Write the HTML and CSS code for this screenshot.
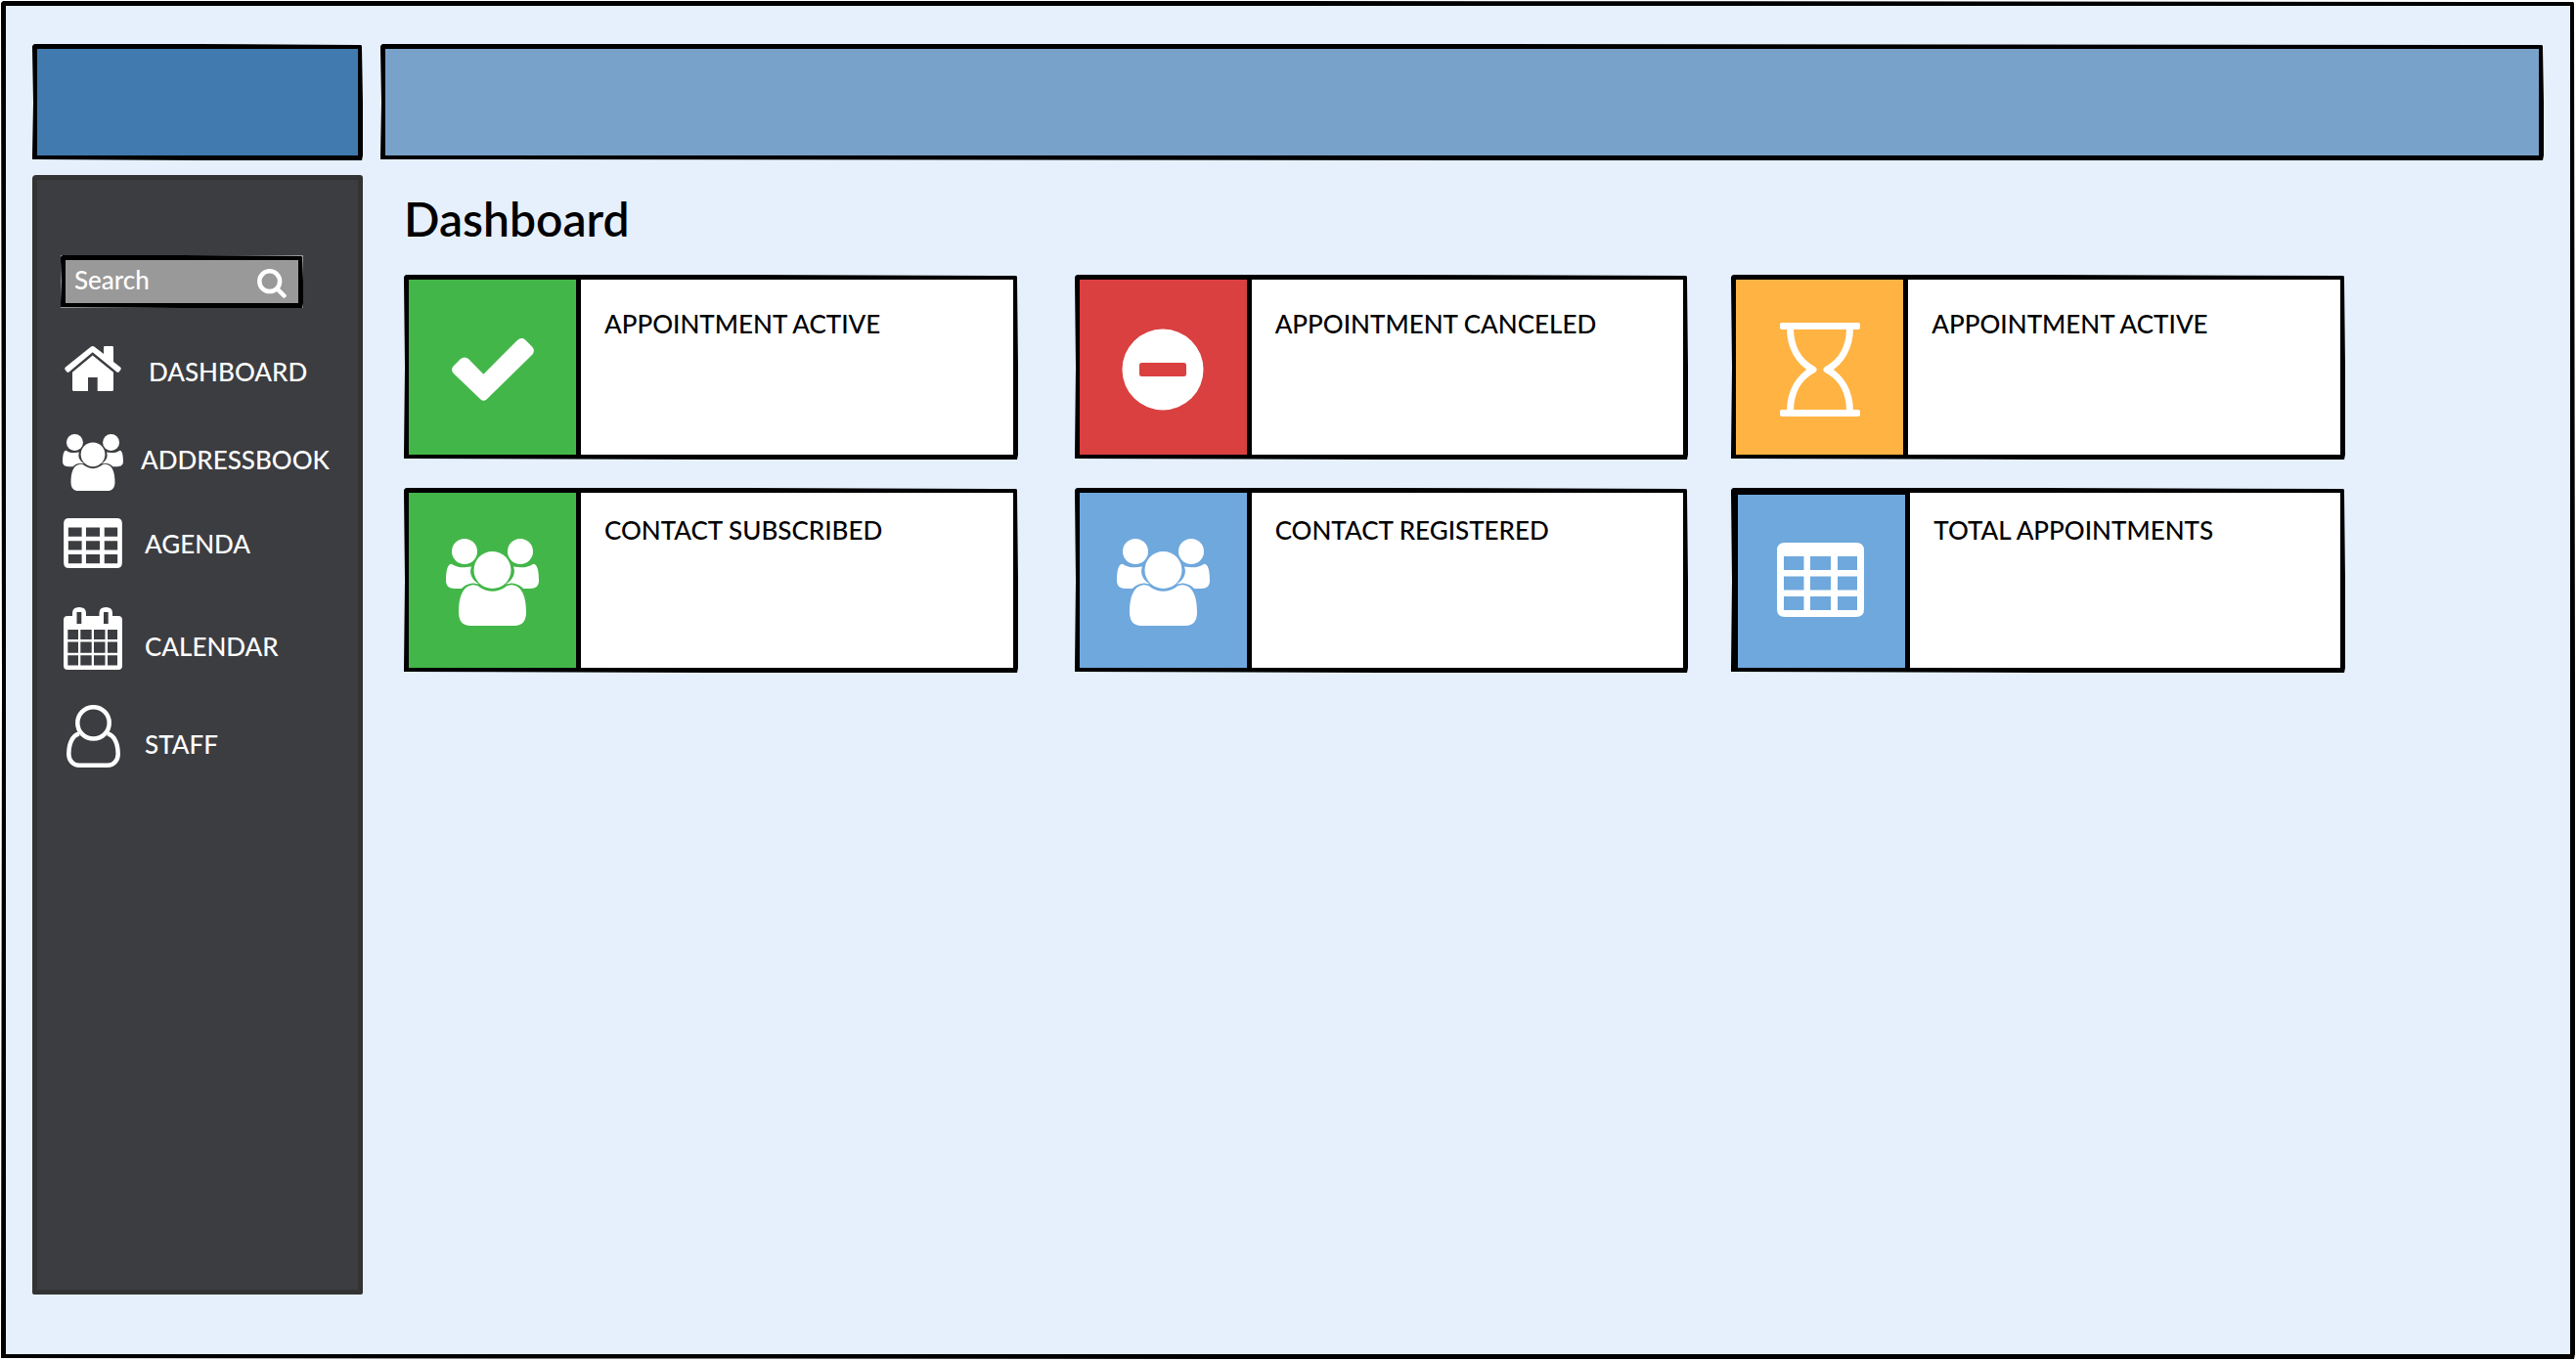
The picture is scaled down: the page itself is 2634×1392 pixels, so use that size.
FILE: index.html
```html
<!DOCTYPE html>
<html lang="en">
<head>
<meta charset="utf-8">
<title>Dashboard</title>
<link rel="stylesheet" href="styles.css">
</head>
<body>
<svg class="sprite" aria-hidden="true">
  <symbol id="i-home" viewBox="0 0 58 46">
    <path d="M1 21.500 L26.500 1 Q28.700 -.8 31 1 L40 8 V1.200 Q40 0 41.200 0 H48.800 Q50 0 50 1.200 V16 L57 21.500 Q58.400 22.800 57.300 24.200 L55.800 26.200 Q54.600 27.400 53.200 26.300 L28.700 6.300 L4.800 26.300 Q3.400 27.400 2.200 26.200 L.7 24.200 Q-.4 22.800 1 21.500Z"/>
    <path d="M28.700 9.500 L50 26.800 V44.500 Q50 46 48.500 46 H33.700 V32 H24 V46 H9.500 Q8 46 8 44.500 V26.800Z"/>
  </symbol>
  <symbol id="i-users" viewBox="0 0 95 89">
    <circle cx="19" cy="13" r="13"/>
    <circle cx="76" cy="13" r="13"/>
    <circle cx="47.500" cy="32" r="19"/>
    <path id="side" d="M6 26 C10 28.500 14 29.500 19 29.300 L26 28.500 C23.500 35 26 42 34 46.500 L28 45.500 C22 46 18 48.500 16 51 H9 C3 51 0 48 0 43 C0 35 1 28 4 26.200 Q5 25.600 6 26Z"/>
    <use href="#side" transform="matrix(-1 0 0 1 95 0)"/>
    <path d="M26 47.500 C30 47 33 48 35 50 A23 23 0 0 0 60 50 C62 48 65 47 69 47.500 C78 49 82 60 82 75 C82 84 78 89 70 89 H25 C17 89 13 84 13 75 C13 60 17 49 26 47.500Z"/>
  </symbol>
  <symbol id="i-table" viewBox="0 0 89 76">
    <path fill-rule="evenodd" d="M8 0H81Q89 0 89 8V68Q89 76 81 76H8Q0 76 0 68V8Q0 0 8 0Z M7 14V28H27.500V14Z M34 14V28H55V14Z M62 14V28H82V14Z M7 34.500V48.500H27.500V34.500Z M34 34.500V48.500H55V34.500Z M62 34.500V48.500H82V34.500Z M7 55V69H27.500V55Z M34 55V69H55V55Z M62 55V69H82V55Z"/>
  </symbol>
  <symbol id="i-calendar" viewBox="0 0 60 64">
    <path fill-rule="evenodd" d="M4 9H9V6Q9 0 16 0T23 6V9H36.500V6Q36.500 0 43.300 0T50 6V9H56Q60 9 60 13V60Q60 64 56 64H4Q0 64 0 60V13Q0 9 4 9Z M13.500 5V17H18.300V5Z M41 5V17H45.700V5Z M4.300 23V33H15V23Z M17.300 23V33H28.700V23Z M31 23V33H42.500V23Z M45 23V33H55V23Z M4.300 35.500V46.700H15V35.500Z M17.300 35.500V46.700H28.700V35.500Z M31 35.500V46.700H42.500V35.500Z M45 35.500V46.700H55V35.500Z M4.300 49.300V59.500H15V49.300Z M17.300 49.300V59.500H28.700V49.300Z M31 49.300V59.500H42.500V49.300Z M45 49.300V59.500H55V49.300Z"/>
  </symbol>
  <symbol id="i-user" viewBox="0 0 55 64">
    <g fill="none" stroke="currentColor" stroke-width="4.500">
      <circle cx="27.500" cy="18.400" r="16.200"/>
      <path d="M13 29.500 C5 31 2.300 42 2.300 50 C2.300 57 7 61.700 13 61.700 H42 C48 61.700 52.700 57 52.700 50 C52.700 42 50 31 42 29.500"/>
    </g>
  </symbol>
  <symbol id="i-search" viewBox="0 0 30 30">
    <g fill="none" stroke="currentColor" stroke-width="4.500" stroke-linecap="round">
      <circle cx="12.700" cy="12.700" r="10.400"/>
      <path d="M20.500 20.500 L27.500 27.500"/>
    </g>
  </symbol>
  <symbol id="i-check" viewBox="0 0 84 64">
    <path d="M9 21 Q13 18 17 21 L32.400 36.700 L67 2 Q71 -1.500 75 1.500 L82 8.500 Q85.500 12.500 82.500 16.500 L35.500 62.500 Q32.400 65 29.500 62.500 L1.800 36 Q-1.500 32 1.500 28.500Z"/>
  </symbol>
  <symbol id="i-minus" viewBox="0 0 84 84">
    <path fill-rule="evenodd" d="M42 0.500A41.500 41.500 0 1 1 42 83.500A41.500 41.500 0 1 1 42 .5Z M20.500 35Q18 35 18 37.500V46.500Q18 49 20.500 49H63.500Q66 49 66 46.500V37.500Q66 35 63.500 35Z"/>
  </symbol>
  <symbol id="i-hourglass" viewBox="0 0 82 96">
    <rect width="82" height="7" rx="2"/>
    <rect y="89" width="82" height="7" rx="2"/>
    <g fill="none" stroke="currentColor" stroke-width="7" stroke-linejoin="round">
      <path d="M10.500 5 C10.500 25 19 40 34 48 C19 56 10.500 71 10.500 91"/>
      <path d="M71.500 5 C71.500 25 63 40 48 48 C63 56 71.500 71 71.500 91"/>
    </g>
  </symbol>
</svg>

<div class="frame sketch">
  <div class="brand sketch"></div>
  <header class="topbar sketch"></header>

  <aside class="sidebar">
    <form class="search sketch" role="search">
      <input class="search-input" type="search" placeholder="Search" aria-label="Search">
      <button class="search-button" type="submit" aria-label="Search"><svg class="icon" width="30" height="30"><use href="#i-search"/></svg></button>
    </form>
    <nav>
      <ul class="menu">
        <li><a class="menu-link menu-link-wide" href="#dashboard"><span class="menu-icon"><svg class="icon" width="58" height="46"><use href="#i-home"/></svg></span><span class="menu-label">DASHBOARD</span></a></li>
        <li><a class="menu-link menu-link-close" href="#addressbook"><span class="menu-icon"><svg class="icon" width="62" height="58"><use href="#i-users"/></svg></span><span class="menu-label">ADDRESSBOOK</span></a></li>
        <li><a class="menu-link" href="#agenda"><span class="menu-icon"><svg class="icon" width="60" height="51"><use href="#i-table"/></svg></span><span class="menu-label">AGENDA</span></a></li>
        <li><a class="menu-link menu-link-tall" href="#calendar"><span class="menu-icon"><svg class="icon" width="60" height="64"><use href="#i-calendar"/></svg></span><span class="menu-label">CALENDAR</span></a></li>
        <li><a class="menu-link menu-link-tall" href="#staff"><span class="menu-icon"><svg class="icon" width="55" height="64"><use href="#i-user"/></svg></span><span class="menu-label">STAFF</span></a></li>
      </ul>
    </nav>
  </aside>

  <main class="content">
    <h1 class="title">Dashboard</h1>
    <div class="cards">
      <section class="card sketch"><div class="tile tile-green"><svg class="icon" width="84" height="64"><use href="#i-check"/></svg></div><h2 class="card-title">APPOINTMENT ACTIVE</h2></section>
      <section class="card sketch"><div class="tile tile-red"><svg class="icon" width="84" height="84"><use href="#i-minus"/></svg></div><h2 class="card-title">APPOINTMENT CANCELED</h2></section>
      <section class="card sketch"><div class="tile tile-orange"><svg class="icon" width="82" height="96"><use href="#i-hourglass"/></svg></div><h2 class="card-title">APPOINTMENT ACTIVE</h2></section>
      <section class="card card-lower sketch"><div class="tile tile-green"><svg class="icon" width="95" height="89"><use href="#i-users"/></svg></div><h2 class="card-title">CONTACT SUBSCRIBED</h2></section>
      <section class="card card-lower sketch"><div class="tile tile-blue"><svg class="icon" width="95" height="89"><use href="#i-users"/></svg></div><h2 class="card-title">CONTACT REGISTERED</h2></section>
      <section class="card card-lower sketch"><div class="tile tile-blue tile-heavy"><svg class="icon" width="89" height="76"><use href="#i-table"/></svg></div><h2 class="card-title">TOTAL APPOINTMENTS</h2></section>
    </div>
  </main>
</div>
</body>
</html>
```
FILE: styles.css
```css
* { box-sizing: border-box; }

body {
  margin: 0;
  padding: 1px;
  background: #fff;
  color: #000;
  font: 500 26px/32px Lato, "Liberation Sans", sans-serif;
}

.sprite { position: absolute; width: 0; height: 0; }
.icon { display: block; fill: currentColor; color: #fff; }

/* Pen-drawn outline: straight on the inside, slightly uneven on the outside */
.sketch {
  border: 5px solid #000;
  border-image: url("data:image/svg+xml,%3Csvg xmlns='http://www.w3.org/2000/svg' width='100' height='100'%3E%3Cpath fill-rule='evenodd' d='M2 0H50L95 1H98L99 2V5L100 50V95L99 100H95L50 100L5 99H0V95L1 50L0 5V2Z M5 5V95H95V5Z'/%3E%3C/svg%3E") 5 stretch;
  background-clip: padding-box;
}

.frame {
  display: grid;
  grid-template-columns: 338px minmax(0, 1fr);
  grid-template-rows: 119px 1fr;
  gap: 15px 18px;
  min-height: calc(100vh - 3px);
  padding: 39px 27px 61px;
  background-color: #e6f0fd;
}

.brand { background-color: #417aaf; }
.topbar { background-color: #79a2ca; }

.sidebar {
  padding: 77px 24px 24px;
  border: 5px solid #333;
  border-radius: 4px 3px 2px 2px;
  background: #3c3d41;
}

.search {
  display: flex;
  align-items: center;
  width: 248px;
  height: 54px;
  margin: 0 0 39px;
  padding: 0 12px 0 9px;
  background: #999;
}
.search-input {
  flex: 1;
  min-width: 0;
  padding: 0 0 4px;
  border: 0;
  background: none;
  color: #fff;
  font: inherit;
}
.search-input::placeholder { color: #fff; opacity: 1; }
.search-button { padding: 4px 0 0; border: 0; background: none; }

.menu {
  display: grid;
  grid-template-rows: 90px 86px 91px 100px auto;
  margin: 0;
  padding: 0 0 0 2px;
  list-style: none;
}
.menu-link {
  display: flex;
  gap: 22px;
  color: #fff;
  text-decoration: none;
}
.menu-link-wide { gap: 26px; }
.menu-link-close { gap: 18px; }
.menu-icon { display: flex; flex: 0 0 62px; justify-content: center; }
.menu-label { padding-top: 10px; }
.menu-link-tall .menu-label { padding-top: 24px; }

.content { padding: 13px 203px 0 24px; }
.title {
  margin: 0 0 25px;
  font-size: 48px;
  line-height: 64px;
  font-weight: 600;
}

.cards {
  display: grid;
  grid-template-columns: 686fr 672fr 628fr;
  row-gap: 29px;
}
.card {
  display: flex;
  height: 189px;
  background-color: #fff;
}
.card:nth-child(3n+1) { margin-right: 58px; }
.card:nth-child(3n+2) { margin-right: 44px; }
.card-title {
  margin: 0;
  padding: 29px 0 0 24px;
  font-size: 26px;
  line-height: 32px;
  font-weight: 500;
}
.card-lower .card-title { padding-top: 22px; }

.tile {
  display: grid;
  place-items: center;
  flex: 0 0 176px;
  padding-top: 4px;
  border-right: 5px solid #000;
}
.tile-green { background: #43b649; }
.tile-red { background: #da4040; }
.tile-orange { background: #ffb342; }
.tile-blue { background: #6fa8dc; }
.tile-heavy {
  flex-basis: 178px;
  padding: 0 2px 4px 0;
  border-top: 2px solid #000;
  border-left: 2px solid #000;
}
```
